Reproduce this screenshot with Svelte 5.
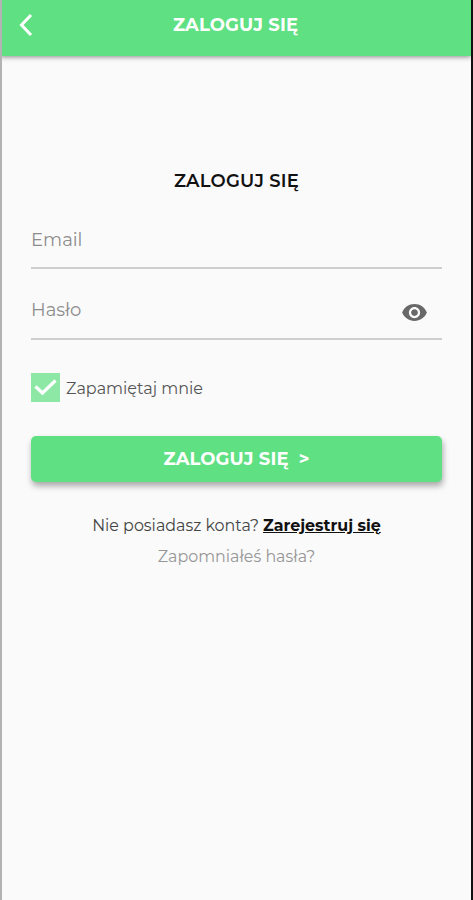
<script lang="ts">
	let email = $state('');
	let password = $state('');
	let showPassword = $state(false);
	let remember = $state(true);
</script>

<div class="screen">
	<header>
		<button class="back" aria-label="Wstecz">
			<svg width="15" height="24" viewBox="0 0 15 24">
				<path d="M13 2 3.5 12 13 22" fill="none" stroke="currentColor" stroke-width="3" />
			</svg>
		</button>
		<span class="bar-title">ZALOGUJ SIĘ</span>
	</header>

	<main>
		<h1>ZALOGUJ SIĘ</h1>

		<div class="field">
			<input class="email" type="text" placeholder="Email" bind:value={email} />
		</div>
		<div class="field password">
			<input class="pass" type={showPassword ? 'text' : 'password'} placeholder="Hasło" bind:value={password} />
			<button class="eye" aria-label="Pokaż hasło" onclick={() => (showPassword = !showPassword)}>
				<svg width="27" height="27" viewBox="0 0 24 24" fill="currentColor">
					<path d="M12 4.5C7 4.5 2.73 7.61 1 12c1.73 4.39 6 7.5 11 7.5s9.27-3.11 11-7.5c-1.73-4.39-6-7.5-11-7.5zM12 17c-2.76 0-5-2.24-5-5s2.24-5 5-5 5 2.24 5 5-2.24 5-5 5zm0-8c-1.66 0-3 1.34-3 3s1.34 3 3 3 3-1.34 3-3-1.34-3-3-3z" />
				</svg>
			</button>
		</div>

		<button class="remember" role="checkbox" aria-checked={remember} onclick={() => (remember = !remember)}>
			<span class="box" class:checked={remember}>
				{#if remember}
					<svg width="29" height="29" viewBox="0 0 29 29">
						<path d="M4.5 13.5 11.5 20 24.5 7.5" fill="none" stroke="#fff" stroke-width="3.2" />
					</svg>
				{/if}
			</span>
			<span class="remember-label">Zapamiętaj mnie</span>
		</button>

		<button class="submit"><span class="submit-text">ZALOGUJ SIĘ</span><span class="arrow">&gt;</span></button>

		<p class="register"><span>Nie posiadasz konta?</span><a href="#register">Zarejestruj się</a></p>
		<p class="forgot">Zapomniałeś hasła?</p>
	</main>
</div>

<style>
	:global(body) {
		margin: 0;
		background: #fafafa;
	}

	.screen {
		box-sizing: border-box;
		height: 900px;
		overflow: hidden;
		background: #fafafa;
		border-left: 2px solid #b3b3b3;
		border-right: 2px solid #111;
		font-family: Montserrat, Inter, sans-serif;
		color: #111;
	}

	button {
		display: flex;
		align-items: center;
		padding: 0;
		border: 0;
		background: none;
		font: inherit;
		cursor: pointer;
	}

	header {
		display: grid;
		grid-template-columns: 50px 1fr 52px;
		align-items: center;
		height: 56px;
		margin-left: -2px;
		box-sizing: border-box;
		background: #5fe083;
		border-left: 2px solid #4cae69;
		box-shadow: 0 1px 5px rgba(0, 0, 0, 0.45);
		color: #fff;
	}

	.back {
		margin: -6px 0 0 16px;
		color: #fff;
	}

	.bar-title {
		margin-top: -7px;
		text-align: center;
		font-size: 18px;
		font-weight: 700;
		letter-spacing: 0.1px;
		white-space: nowrap;
	}

	main {
		padding: 113px 29px 0;
	}

	h1 {
		margin: 0;
		text-align: center;
		font-size: 18px;
		font-weight: 600;
		line-height: 24px;
		letter-spacing: 0.2px;
	}

	.field {
		display: flex;
		box-sizing: border-box;
		height: 76px;
		padding-top: 35px;
		border-bottom: 2px solid #cecece;
	}

	.field.password {
		height: 71px;
		padding-top: 29px;
	}

	input {
		flex: 1;
		min-width: 0;
		height: 24px;
		padding: 0;
		border: 0;
		outline: 0;
		background: none;
		font: 400 18px/24px Montserrat, Inter, sans-serif;
	}

	input::placeholder {
		color: #8d8d8d;
		opacity: 1;
	}

	.eye {
		height: 27px;
		margin: 1px 14px 0 0;
		color: #686868;
	}

	.remember {
		gap: 6px;
		margin-top: 33px;
	}

	.box {
		width: 29px;
		height: 29px;
		box-sizing: border-box;
		border: 2px solid #8ee8a5;
	}

	.box.checked {
		border: 0;
		background: #8ee8a5;
	}

	.box svg {
		display: block;
	}

	.remember-label {
		margin-top: 2px;
		font-size: 16px;
		color: #555;
	}

	.submit {
		justify-content: center;
		width: 100%;
		height: 46px;
		margin-top: 34px;
		padding-bottom: 1px;
		border-radius: 5px;
		background: #5fe083;
		box-shadow: 1px 4px 6px rgba(0, 0, 0, 0.33);
		color: #fff;
		font-size: 18px;
		font-weight: 700;
		letter-spacing: 0.1px;
	}

	.arrow {
		margin-left: 10px;
	}

	p {
		margin: 0;
		text-align: center;
	}

	.register {
		display: flex;
		justify-content: center;
		gap: 4px;
		margin-top: 32px;
		font-size: 15.9px;
		line-height: 24px;
		color: #444;
	}

	.register a {
		color: #111;
		font-weight: 700;
		text-underline-offset: 1px;
	}

	.forgot {
		margin-top: 7px;
		font-size: 15.9px;
		line-height: 24px;
		color: #969696;
	}
</style>
